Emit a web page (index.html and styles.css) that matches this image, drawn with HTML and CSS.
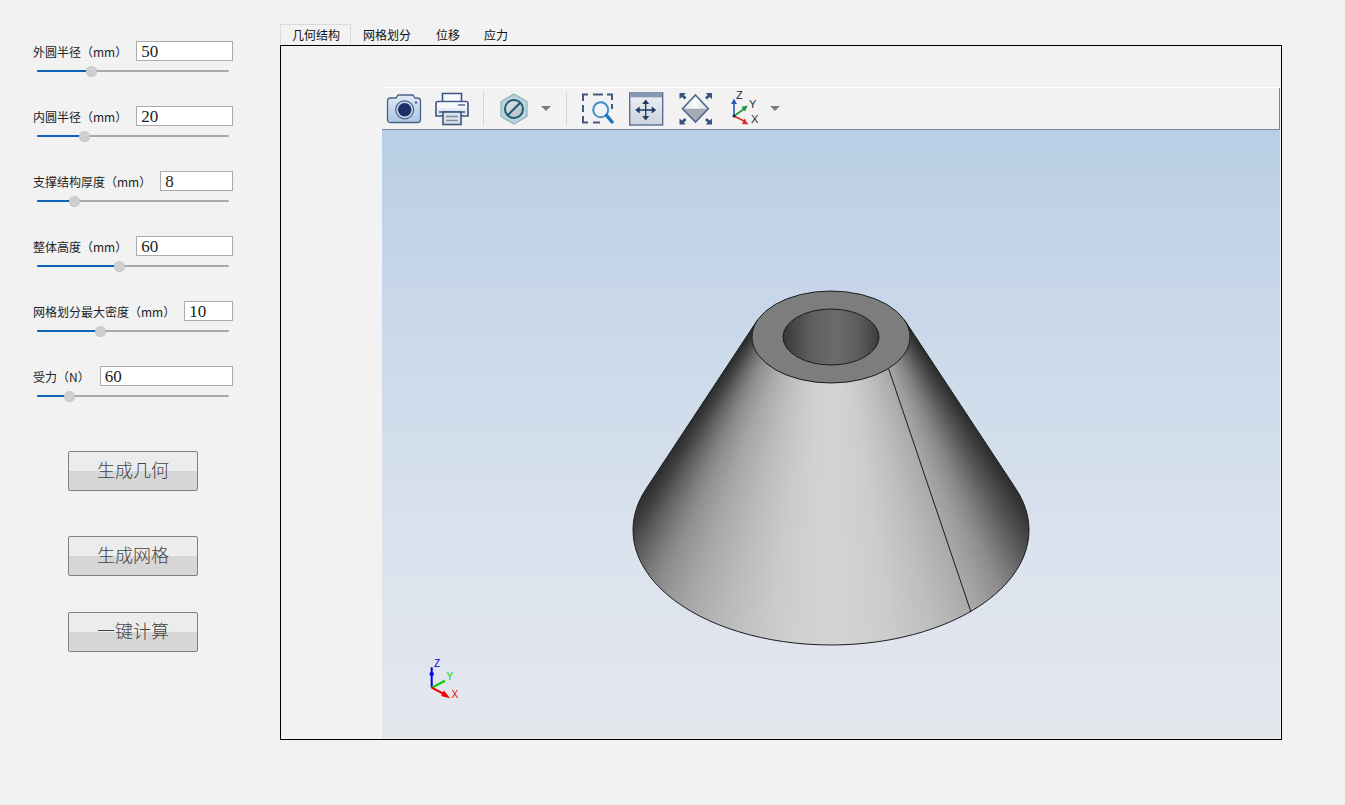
FILE: index.html
```html
<!DOCTYPE html>
<html lang="zh">
<head>
<meta charset="utf-8">
<title>几何结构</title>
<link rel="stylesheet" href="styles.css">
</head>
<body>
<div class="app">
  <aside class="side">
    <div class="param">
      <div class="param-row"><label class="param-label">外圆半径（mm）</label><input class="param-input" value="50"></div>
      <div class="slider"><div class="slider-fill" style="width:28.1%"></div><div class="slider-thumb" style="left:28.1%"></div></div>
    </div>
    <div class="param">
      <div class="param-row"><label class="param-label">内圆半径（mm）</label><input class="param-input" value="20"></div>
      <div class="slider"><div class="slider-fill" style="width:24.5%"></div><div class="slider-thumb" style="left:24.5%"></div></div>
    </div>
    <div class="param">
      <div class="param-row"><label class="param-label">支撑结构厚度（mm）</label><input class="param-input" value="8"></div>
      <div class="slider"><div class="slider-fill" style="width:19.3%"></div><div class="slider-thumb" style="left:19.3%"></div></div>
    </div>
    <div class="param">
      <div class="param-row"><label class="param-label">整体高度（mm）</label><input class="param-input" value="60"></div>
      <div class="slider"><div class="slider-fill" style="width:42.7%"></div><div class="slider-thumb" style="left:42.7%"></div></div>
    </div>
    <div class="param">
      <div class="param-row"><label class="param-label">网格划分最大密度（mm）</label><input class="param-input" value="10"></div>
      <div class="slider"><div class="slider-fill" style="width:32.8%"></div><div class="slider-thumb" style="left:32.8%"></div></div>
    </div>
    <div class="param">
      <div class="param-row"><label class="param-label param-label-short">受力（N）</label><input class="param-input" value="60"></div>
      <div class="slider"><div class="slider-fill" style="width:16.7%"></div><div class="slider-thumb" style="left:16.7%"></div></div>
    </div>
    <div class="actions">
      <button class="action action-geo">生成几何</button>
      <button class="action action-mesh">生成网格</button>
      <button class="action action-run">一键计算</button>
    </div>
  </aside>

  <main class="work">
    <nav class="tabs">
      <div class="tab tab-active">几何结构</div>
      <div class="tab">网格划分</div>
      <div class="tab tab-disp">位移</div>
      <div class="tab">应力</div>
    </nav>
    <section class="frame">
      <div class="viewer">
        <div class="toolbar">
          <svg class="tool tool-camera" width="36" height="30" viewBox="0 0 36 30">
            <defs><linearGradient id="camBody" x1="0" y1="0" x2="0" y2="1"><stop offset="0" stop-color="#dfe9f4"/><stop offset="1" stop-color="#aec7e2"/></linearGradient></defs>
            <path d="M1.5 7 Q1.5 4 4.5 4 H10 L12 1 H27 L29 4 H31.5 Q34.5 4 34.5 7 V26 Q34.5 28.5 31.5 28.5 H4.5 Q1.5 28.5 1.5 26 Z" fill="url(#camBody)" stroke="#47618a" stroke-width="1.3"/>
            <circle cx="18.7" cy="15.8" r="9" fill="#c9d8ea" stroke="#47618a" stroke-width="1.2"/>
            <circle cx="18.7" cy="15.8" r="6.8" fill="#1b2f66"/>
            <circle cx="30" cy="8.5" r="1.2" fill="#47618a"/>
          </svg>
          <svg class="tool tool-print" width="36" height="36" viewBox="0 0 36 36">
            <path d="M8.5 11 V2.5 H27.5 V11" fill="#fafbfc" stroke="#3d5683" stroke-width="1.6"/>
            <path d="M4 10.5 H32 Q34 10.5 34 12.5 V25 H2 V12.5 Q2 10.5 4 10.5 Z" fill="#e2e8ef" stroke="#3d5683" stroke-width="1.6"/>
            <rect x="3" y="11.5" width="30" height="6" fill="#f5f7fa"/>
            <rect x="24" y="13" width="7" height="2" fill="#7f8ea6"/>
            <path d="M5 21 H31" stroke="#3d5683" stroke-width="1.5"/>
            <rect x="9" y="21" width="18" height="12.5" fill="#dde3ea" stroke="#3d5683" stroke-width="1.6"/>
            <path d="M12 25.5 H24 M12 29.5 H24" stroke="#7f8ea6" stroke-width="1.4"/>
          </svg>
          <span class="tool-sep"></span>
          <svg class="tool tool-hex" width="30" height="32" viewBox="0 0 30 32">
            <defs><linearGradient id="hexFill" x1="0" y1="0" x2="1" y2="1"><stop offset="0" stop-color="#e8ecee"/><stop offset="1" stop-color="#adb9bf"/></linearGradient></defs>
            <path d="M15 1 L28 8.5 V23.5 L15 31 L2 23.5 V8.5 Z" fill="#bcd3db" stroke="#8db1bf" stroke-width="1.2"/>
            <circle cx="15" cy="16" r="9" fill="url(#hexFill)" stroke="#1d5c70" stroke-width="2"/>
            <path d="M9 22 L21 10" stroke="#1d5c70" stroke-width="2"/>
          </svg>
          <span class="caret caret-hex"></span>
          <span class="tool-sep"></span>
          <svg class="tool tool-fit" width="34" height="32" viewBox="0 0 34 32">
            <path d="M3 8 V1.5 H8 M13 1.5 H23 M27 1.5 H32 V7 M3 12 V19 M3 23 V29.5 H8 M13 29.5 H20" fill="none" stroke="#44587c" stroke-width="2"/>
            <path d="M32 11 V16" fill="none" stroke="#44587c" stroke-width="2"/>
            <circle cx="20.7" cy="16.8" r="7.5" fill="#eef4fa" fill-opacity="0.6" stroke="#3f8ec6" stroke-width="2"/>
            <path d="M26.7 22.5 L32 29" stroke="#1f73b7" stroke-width="3.4" stroke-linecap="round"/>
          </svg>
          <svg class="tool tool-pan" width="35" height="34" viewBox="0 0 35 34">
            <defs><linearGradient id="panFill" x1="0" y1="0" x2="0" y2="1"><stop offset="0" stop-color="#eef0f4"/><stop offset="1" stop-color="#ccd3dd"/></linearGradient></defs>
            <rect x="0.7" y="1" width="33" height="32" fill="url(#panFill)" stroke="#5b6f92" stroke-width="1.4"/>
            <rect x="1.4" y="1.7" width="31.6" height="3.6" fill="#8798b4"/>
            <path d="M16.7 10 V26 M9 18 H25" stroke="#1f3a66" stroke-width="1.3"/>
            <path d="M16.7 7.5 L20.2 12 H13.2 Z M16.7 28.5 L20.2 24 H13.2 Z M6.2 18 L10.7 14.5 V21.5 Z M27.2 18 L22.7 14.5 V21.5 Z" fill="#1f3a66"/>
          </svg>
          <svg class="tool tool-iso" width="34" height="34" viewBox="0 0 34 34">
            <defs><linearGradient id="isoTop" x1="0" y1="0" x2="1" y2="0"><stop offset="0" stop-color="#e2e4e8"/><stop offset="0.5" stop-color="#fbfbfc"/><stop offset="1" stop-color="#d4d7dc"/></linearGradient></defs>
            <path d="M16.5 3 L29.3 16.8 H3.5 Z" fill="url(#isoTop)"/>
            <path d="M3.5 16.8 H29.3 L16.5 30 Z" fill="#a6aab2"/>
            <path d="M16.5 3 L29.3 16.8 L16.5 30 L3.5 16.8 Z" fill="none" stroke="#50688f" stroke-width="1.6"/>
            <path d="M0.5 1 H6.5 L5 3 L7.5 5.5 L5.5 7.5 L3 5 L0.5 7 Z M33 1 H27 L28.5 3 L26 5.5 L28 7.5 L30.5 5 L33 7 Z M0.5 32.5 H6.5 L5 30.5 L7.5 28 L5.5 26 L3 28.5 L0.5 26.5 Z M33 32.5 H27 L28.5 30.5 L26 28 L28 26 L30.5 28.5 L33 26.5 Z" fill="#38557f"/>
          </svg>
          <div class="axes-tool">
            <svg class="axes-tool-art" width="30" height="34" viewBox="0 0 30 34">
              <path d="M6 24 V10" stroke="#2a5db0" stroke-width="1.6"/>
              <path d="M6 6.5 L9 12 H3 Z" fill="#2a5db0"/>
              <path d="M6 24 L16 17" stroke="#22933c" stroke-width="1.6"/>
              <path d="M19.7 13.5 L17 19.5 L13.5 15 Z" fill="#22933c"/>
              <path d="M6 24 L16 29" stroke="#e02b2b" stroke-width="1.6"/>
              <path d="M20.3 32.5 L14 32 L16.5 26.5 Z" fill="#e02b2b"/>
              <circle cx="6" cy="24" r="1.5" fill="#222"/>
            </svg>
            <span class="axis-mark axis-z">Z</span>
            <span class="axis-mark axis-y">Y</span>
            <span class="axis-mark axis-x">X</span>
          </div>
          <span class="caret caret-axes"></span>
        </div>
        <div class="scene">
          <div class="cone-side"></div>
          <svg class="cone-lines" width="898" height="610" viewBox="382 130 898 610">
            <defs>
              <linearGradient id="holeShade" x1="0" y1="0" x2="1" y2="0">
                <stop offset="0" stop-color="#383838"/>
                <stop offset="0.3" stop-color="#5f5f5f"/>
                <stop offset="0.55" stop-color="#6b6b6b"/>
                <stop offset="0.8" stop-color="#5c5c5c"/>
                <stop offset="1" stop-color="#3a3a3a"/>
              </linearGradient>
            </defs>
            <path d="M757.5 320 L646.4 488.4 A198 115 0 1 0 1015.6 488.4 L904.5 320" fill="none" stroke="#1c1c1c" stroke-width="1"/>
            <path d="M888 367 L971 612" fill="none" stroke="#1c1c1c" stroke-width="1"/>
            <ellipse cx="831" cy="337" rx="79" ry="46" fill="#7d7d7d" stroke="#1c1c1c" stroke-width="1"/>
            <ellipse cx="831" cy="337" rx="48" ry="28" fill="url(#holeShade)" stroke="#1c1c1c" stroke-width="1"/>
          </svg>
          <div class="triad">
            <svg width="34" height="42" viewBox="0 0 34 42">
              <path d="M6.7 29.7 V9.3" stroke="#0000e6" stroke-width="2"/>
              <rect x="4.7" y="14.5" width="4" height="3" fill="#0000e6"/>
              <path d="M6.7 29.7 L20 22.7" stroke="#10d010" stroke-width="2.4"/>
              <path d="M6.7 29.7 L20 36.5" stroke="#f00000" stroke-width="2"/>
              <path d="M25 40.3 L16 38 L19 32.5 Z" fill="#f00000"/>
            </svg>
            <span class="triad-mark triad-z">Z</span>
            <span class="triad-mark triad-y">Y</span>
            <span class="triad-mark triad-x">X</span>
          </div>
        </div>
      </div>
    </section>
  </main>
</div>
</body>
</html>
```
FILE: styles.css
```css
* { box-sizing: border-box; }
html, body { margin: 0; height: 100%; }
body {
  background: #f2f2f2;
  color: #1a1a1a;
  font-family: "Noto Sans CJK SC", "Liberation Sans", sans-serif;
  overflow: hidden;
}
.app { display: flex; height: 805px; }

/* left column */
.side { width: 280px; flex: none; padding: 41px 47px 0 33px; }
.param { height: 65px; }
.param-row { display: flex; align-items: flex-start; height: 20px; }
.param-label { font-size: 12px; line-height: 20px; padding-top: 1px; white-space: nowrap; margin-right: 9px; color: #222; }
.param-label-short { margin-right: 10px; }
.param-input {
  flex: 1; min-width: 0; height: 20px; padding: 1px 4px 0;
  border: 1px solid #ababab; background: #fff;
  font: 17px/17px "Liberation Serif", serif; color: #222; outline: none;
}
.slider { position: relative; height: 2px; margin: 9px 4px 0 4px; background: #a9a9a9; border-radius: 1px; }
.slider-fill { height: 2px; background: #0f62b5; border-radius: 1px; }
.slider-thumb {
  position: absolute; top: -4px; width: 11px; height: 11px; margin-left: -5px;
  border-radius: 50%; background: #cfcfcf; border: 1px dotted #bdbdbd;
}
.actions { display: flex; flex-direction: column; align-items: flex-start; padding-left: 35px; }
.action {
  width: 130px; height: 40px; padding: 0 0 4px; cursor: default;
  border: 1px solid #808080; border-radius: 2px;
  background: linear-gradient(#ececec 0 50%, #d6d6d6 50% 100%);
  font: 300 18px/34px "Noto Sans CJK SC", sans-serif; color: #444;
}
.action-geo { margin-top: 20px; }
.action-mesh { margin-top: 45px; }
.action-run { margin-top: 36px; }

/* right column */
.work { flex: none; width: 1002px; padding-top: 24px; }
.tabs { display: flex; height: 21px; }
.tab { padding: 0 12px; font-size: 12px; line-height: 22px; color: #111; }
.tab-active { border: 1px solid #dadada; border-bottom: 0; line-height: 20px; padding: 0 10px 0 11px; }
.tab-disp { margin-left: 1px; }
.frame { height: 695px; border: 1px solid #000; padding: 41px 1px 0 101px; }
.viewer { display: flex; flex-direction: column; height: 652px; border-top: 1px solid #fff; }

/* toolbar */
.toolbar {
  display: flex; align-items: center; height: 42px; flex: none;
  background: #f2f2f2;
  border-bottom: 1px solid #7f8790;
  border-right: 1px solid #7f8790;
}
.tool { flex: none; display: block; }
.tool-camera { margin-left: 4px; }
.tool-print { margin-left: 12px; }
.tool-sep { width: 1px; height: 34px; background: #d5d5d5; flex: none; }
.tool-print + .tool-sep { margin-left: 13px; }
.tool-hex { margin-left: 15px; }
.caret { width: 0; height: 0; flex: none; border: 5.5px solid transparent; border-top: 5px solid #7d7d7d; border-bottom: 0; }
.caret-hex { margin-left: 12px; }
.caret-hex + .tool-sep { margin-left: 15px; }
.tool-fit { margin-left: 13px; }
.tool-pan { margin-left: 15px; }
.tool-iso { margin-left: 15px; }
.axes-tool { position: relative; width: 30px; height: 34px; margin-left: 15px; flex: none; }
.axes-tool-art { display: block; }
.axis-mark { position: absolute; font: 11px/11px "Liberation Sans", sans-serif; color: #1a2a40; }
.axis-z { left: 8px; top: -2px; }
.axis-y { left: 21px; top: 7px; }
.axis-x { left: 23px; top: 22px; }
.caret-axes { margin-left: 12px; }

/* 3D scene */
.scene {
  position: relative; flex: 1;
  background: linear-gradient(#b9cee5 0%, #c9d8e9 30%, #dbe3ee 70%, #e5e7ed 100%);
  overflow: hidden;
}
.cone-side {
  position: absolute; left: 0; top: 0; width: 898px; height: 610px;
  background: conic-gradient(from 146.2deg at 449px 82px,
    #2c2c2c 0deg, #3e3e3e 2deg, #585858 4.6deg, #727272 7deg, #8a8a8a 9.4deg, #9c9c9c 12deg, #aaaaaa 14.6deg,
    #bdbdbd 20deg, #cccccc 26deg, #d1d1d1 30deg, #d3d3d3 33.8deg, #d1d1d1 37.6deg, #cacaca 42deg, #bbbbbb 48deg,
    #a6a6a6 54deg, #909090 58deg, #808080 60deg, #606060 63deg, #404040 65.5deg, #2c2c2c 67.6deg);
  clip-path: path("M375.5 190 L264.4 358.4 A198 115 0 1 0 633.6 358.4 L522.5 190 Z");
}
.cone-lines { position: absolute; left: 0; top: 0; display: block; }
.triad { position: absolute; left: 43px; top: 528px; width: 40px; height: 42px; }
.triad svg { display: block; }
.triad-mark { position: absolute; font: 10px/10px "Liberation Sans", sans-serif; }
.triad-z { left: 9px; top: 1px; color: #0000e6; }
.triad-y { left: 21.5px; top: 14px; color: #10d010; }
.triad-x { left: 26.5px; top: 32px; color: #f00000; }
```
